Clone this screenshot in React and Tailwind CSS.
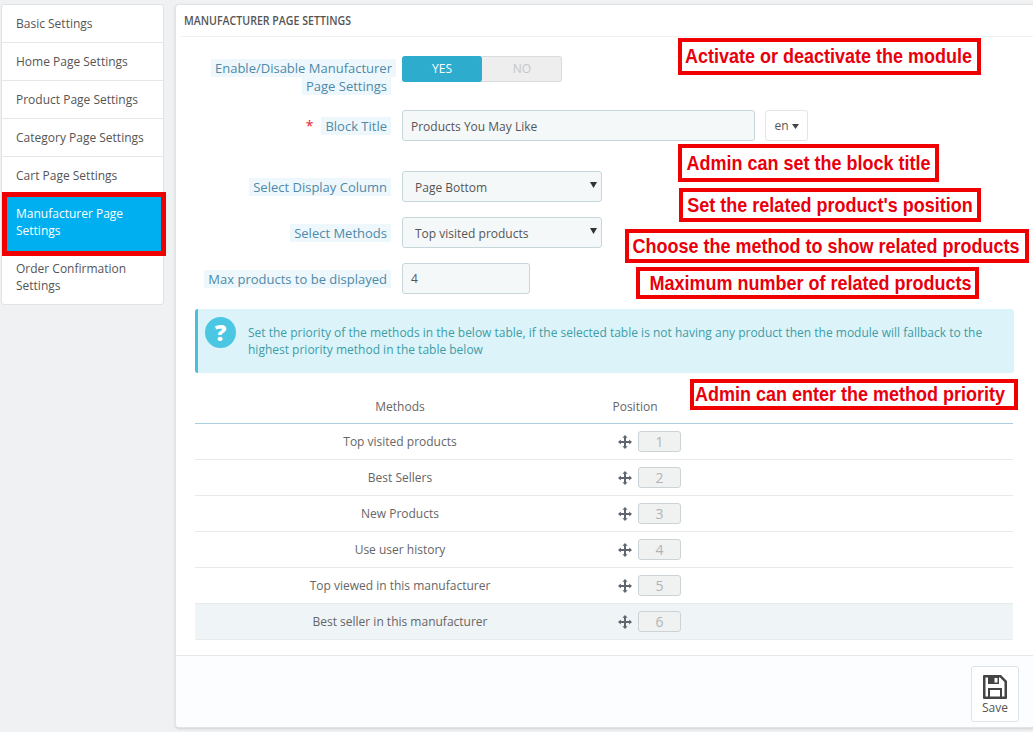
import React from 'react';

const tabs = ['Basic Settings', 'Home Page Settings', 'Product Page Settings', 'Category Page Settings', 'Cart Page Settings'];

const methods = ['Top visited products', 'Best Sellers', 'New Products', 'Use user history', 'Top viewed in this manufacturer', 'Best seller in this manufacturer'];

// red callouts drawn on top of the screenshot
const notes = [
  { text: 'Activate or deactivate the module', cls: 'left-[678px] top-[38px] w-[303px] h-[37px] pr-[2px]' },
  { text: 'Admin can set the block title', cls: 'left-[678px] top-[144px] w-[261px] h-[38px]' },
  { text: "Set the related product's position", cls: 'left-[679px] top-[188px] w-[302px] h-[34px]' },
  { text: 'Choose the method to show related products', cls: 'left-[625px] top-[229px] w-[404px] h-[34px] pr-[2px]' },
  { text: 'Maximum number of related products', cls: 'left-[636px] top-[267px] w-[343px] h-[32px] pl-[6px]' },
  { text: 'Admin can enter the method priority', cls: 'left-[690px] top-[379px] w-[328px] h-[31px] pr-[8px]' },
];

const Label = ({ children, className = '' }) => (
  <span className={`bg-[#eef8fc] text-[#4f89a8] px-1 ${className}`}>{children}</span>
);

const Row = ({ label, className, children }) => (
  <div className={`flex items-start ${className}`}>
    <div className="w-[209px] shrink-0 text-right text-[13px] leading-[18px]">{label}</div>
    <div className="ml-[11px] flex gap-[10px]">{children}</div>
  </div>
);

const SelectBox = ({ value }) => (
  <div className="w-[200px] h-[31px] bg-[#f5f8f9] border border-[#c7d6db] rounded-[3px] pl-3 pr-[4px] pt-[2px] flex items-center justify-between text-[12px] text-[#555]">
    <span>{value}</span>
    <svg width="7" height="6" viewBox="0 0 7 6" className="mb-[5px]"><path d="M0 0h7L3.5 6z" fill="#333" /></svg>
  </div>
);

const MoveIcon = () => (
  <svg width="14" height="14" viewBox="0 0 14 14" fill="#5f6670">
    <path d="M7 0l2.6 2.8H8v3.2h3.2V4.4L14 7l-2.8 2.6V8H8v3.2h1.6L7 14l-2.6-2.8H6V8H2.8v1.6L0 7l2.8-2.6V6H6V2.8H4.4z" />
  </svg>
);

const SaveIcon = () => (
  <svg width="24" height="24" viewBox="0 0 24 24" fill="#444">
    <path fillRule="evenodd" d="M1 0H18L24 6V23a1 1 0 0 1-1 1H1a1 1 0 0 1-1-1V1a1 1 0 0 1 1-1zM2.5 2.5V21.5H5V13H19V21.5H21.5V7L17 2.5H16V9H5V2.5zM7 15V21.5H17V15zM11.5 3V7.5H14.5V3z" />
  </svg>
);

const App = () => {
  return (
    <div className="relative w-[1033px] h-[732px] overflow-hidden bg-[#eff1f2] font-['Open_Sans',sans-serif] text-[#555] flex items-start gap-[11px] pt-1 pl-px">
      {/* Side tabs */}
      <div className="relative w-[163px] shrink-0 bg-white border border-[#dfe3e5] rounded-[3px] text-[12px] leading-[17px] text-[#555]">
        {tabs.map((t) => (
          <div key={t} className="h-[38px] flex items-center pl-[14px] border-b border-[#e4e7e9]">{t}</div>
        ))}
        <div className="h-[58px] bg-[#00aff0] text-white pl-[14px] pt-[10px] pr-4">Manufacturer Page Settings</div>
        <div className="h-[51px] pl-[14px] pt-[7px] pr-4">Order Confirmation Settings</div>
        <div className="absolute left-0 top-[187px] w-[164px] h-[64px] border-[5px] border-[#f00000]" />
      </div>

      {/* Main panel */}
      <div className="w-[860px] h-[724px] shrink-0 bg-white border border-[#e0e4e6] rounded-[4px] shadow-sm flex flex-col">
        <div className="ml-[5px] h-[32px] border-b border-[#eef0f1] pl-[3px] flex items-center text-[13px] font-semibold text-[#555]">
          <span className="inline-block origin-left scale-x-[0.815] whitespace-nowrap">MANUFACTURER PAGE SETTINGS</span>
        </div>

        <div className="pl-[6px]">
          <Row className="mt-[19px] h-[55px]" label={<div className="pt-[3px]"><Label className="mr-[-5px]">Enable/Disable Manufacturer</Label><br /><Label>Page Settings</Label></div>}>
            <div className="w-[160px] h-[26px] flex rounded-[3px] text-[12px] bg-[#eeeeee] shadow-[inset_0_0_0_1px_#d9dcdd]">
              <div className="w-[80px] bg-[#2eacce] text-white rounded-[3px] flex items-center justify-center">YES</div>
              <div className="w-[80px] text-[#c4c7c9] flex items-center justify-center">NO</div>
            </div>
          </Row>

          <Row className="mt-[-1px] h-[61px]" label={<div className="pt-[7px]"><span className="text-[#e8202a] mr-2 text-[14px]">*</span><Label>Block Title</Label></div>}>
            <div className="w-[353px] h-[31px] bg-[#f5f8f9] border border-[#c7d6db] rounded-[3px] pl-2 pt-[2px] flex items-center text-[12px] text-[#555]">Products You May Like</div>
            <div className="w-[43px] h-[31px] bg-white border border-[#dfe5e8] rounded-[3px] pt-px flex items-center justify-center gap-[3px] text-[12px] text-[#555]">
              en
              <svg width="7" height="5" viewBox="0 0 7 5"><path d="M0 0h7L3.5 5z" fill="#444" /></svg>
            </div>
          </Row>

          <Row className="h-[46px]" label={<div className="pt-[7px]"><Label>Select Display Column</Label></div>}>
            <SelectBox value="Page Bottom" />
          </Row>

          <Row className="h-[46px]" label={<div className="pt-[7px]"><Label>Select Methods</Label></div>}>
            <SelectBox value="Top visited products" />
          </Row>

          <Row className="h-[46px]" label={<div className="pt-[7px]"><Label>Max products to be displayed</Label></div>}>
            <div className="w-[128px] h-[31px] bg-[#f5f8f9] border border-[#c7d6db] rounded-[3px] pl-2 pt-px flex items-center text-[12px] text-[#555]">4</div>
          </Row>
        </div>

        {/* Info alert */}
        <div className="ml-[19px] w-[819px] h-[64px] bg-[#dcf4f9] border-l-[3px] border-[#4bbfd9] rounded-[3px] flex items-start pl-[7px] pt-[8px]">
          <div className="w-[31px] h-[31px] shrink-0 rounded-full bg-[#4bc6e3] text-white flex items-center justify-center text-[23px] font-extrabold leading-none">?</div>
          <p className="ml-[12px] pt-[7px] w-[760px] text-[12px] leading-[17px] text-[#3d9ca8]">
            Set the priority of the methods in the below table, if the selected table is not having any product then the module will fallback to the highest priority method in the table below
          </p>
        </div>

        {/* Methods table */}
        <div className="ml-[19px] w-[818px] mt-[18px] text-[12px] text-[#666]">
          <div className="h-[33px] flex items-center border-b border-[#a9cfdc]">
            <div className="w-[410px] text-center">Methods</div>
            <div className="w-[60px] text-center">Position</div>
          </div>
          {methods.map((m, i) => (
            <div key={m} className={`h-[36px] flex items-center border-b border-[#e8eaeb] ${i === 5 ? 'bg-[#eff4f6]' : ''}`}>
              <div className="w-[410px] text-center">{m}</div>
              <div className="ml-[13px] flex items-center gap-[6px]">
                <MoveIcon />
                <div className="w-[43px] h-[21px] bg-[#f0f1f1] border border-[#ccd3d6] rounded-[3px] flex items-center justify-center text-[14px] text-[#b0b4b6]">{i + 1}</div>
              </div>
            </div>
          ))}
        </div>

        {/* Footer */}
        <div className="mt-[15px] flex-1 bg-[#fcfdfe] border-t border-[#e6e9ea] rounded-b-[4px] flex justify-end pt-[10px] pr-[15px]">
          <div className="w-[48px] h-[56px] bg-white border border-[#dfe3e5] rounded-[3px] flex flex-col items-center pt-[8px] text-[12px] text-[#555]">
            <SaveIcon />
            <span className="leading-[16px] mt-[1px]">Save</span>
          </div>
        </div>
      </div>

      {/* Annotations */}
      {notes.map((n) => (
        <div key={n.text} className={`absolute ${n.cls} bg-white border-[4px] border-[#f00000] flex items-center justify-center font-['Liberation_Sans',sans-serif] font-bold text-[18px] text-[#e8000d] whitespace-nowrap`}>
          <span className="inline-block scale-y-[1.1]">{n.text}</span>
        </div>
      ))}
    </div>
  );
};

export default App;
